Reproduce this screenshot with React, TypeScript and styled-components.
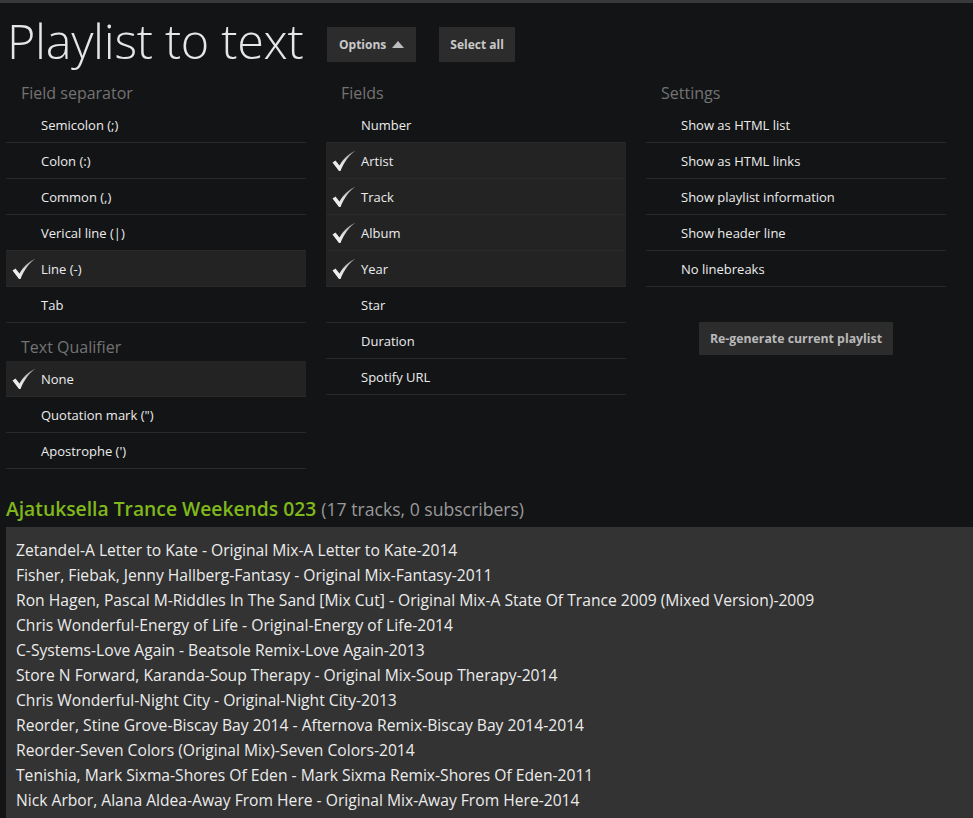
import React from "react";
import styled, { createGlobalStyle } from "styled-components";

const GlobalStyle = createGlobalStyle`
  html, body {
    margin: 0;
    padding: 0;
    background: #131416;
    font-family: "Open Sans", "Noto Sans", sans-serif;
    color: #e8e8e8;
  }
  * { box-sizing: border-box; }
`;

const TopBar = styled.div`
  height: 3px;
  background: #38393b;
`;

const Page = styled.div`
  padding: 0 0 0 6px;
`;

const Header = styled.header`
  height: 66px;
  display: flex;
  align-items: flex-start;
`;

const Title = styled.h1`
  flex: 0 0 321px;
  margin: 7px 0 0 0;
  padding-left: 1px;
  font-family: "Open Sans", sans-serif;
  font-weight: 300;
  font-size: 48.5px;
  line-height: 60px;
  color: #e6e6e6;
  letter-spacing: -0.3px;
  white-space: nowrap;
`;

const ToolButton = styled.button<{ $ml?: number; $px?: number }>`
  height: 35px;
  margin-left: ${(p) => p.$ml ?? 0}px;
  margin-top: 24px;
  padding: 0 ${(p) => p.$px ?? 11}px;
  border: none;
  background: #2c2c2d;
  color: #c9c9c9;
  font-family: "Open Sans", sans-serif;
  font-weight: 700;
  font-size: 12px;
  display: flex;
  align-items: center;
  gap: 6px;
  cursor: pointer;
`;

const Caret = styled.span`
  width: 0;
  height: 0;
  border-left: 6.5px solid transparent;
  border-right: 6.5px solid transparent;
  border-bottom: 7px solid #bdbdbd;
  margin-top: -1px;
`;

const Grid = styled.div`
  display: grid;
  grid-template-columns: repeat(3, 300px);
  column-gap: 20px;
  align-items: start;
`;

const Column = styled.div`
  display: flex;
  flex-direction: column;
`;

const SectionTitle = styled.div`
  height: 38px;
  display: flex;
  align-items: flex-end;
  padding-left: 15px;
  padding-bottom: 3px;
  font-size: 16px;
  line-height: 22px;
  color: #737373;
`;

const Row = styled.div<{ $checked?: boolean }>`
  height: 36px;
  display: flex;
  align-items: center;
  border-bottom: 1px solid #2a2a2b;
  background: ${(p) => (p.$checked ? "#232324" : "transparent")};
  font-size: 13px;
  color: #ececec;
`;

const CheckSlot = styled.span`
  width: 35px;
  flex: 0 0 35px;
  display: flex;
  align-items: center;
  justify-content: flex-start;
  padding-left: 6px;
`;

const ButtonWrap = styled.div`
  display: flex;
  justify-content: center;
  margin-top: 35px;
`;

const RegenButton = styled.button`
  height: 33px;
  padding: 0 11px 0 11px;
  border: none;
  background: #2c2c2d;
  color: #b9b9b9;
  font-family: "Open Sans", sans-serif;
  font-weight: 700;
  font-size: 12.3px;
  cursor: pointer;
`;

const PlaylistTitle = styled.h2`
  margin: 28px 0 6px 0;
  font-weight: 600;
  font-size: 19.3px;
  line-height: 24px;
  color: #80b81c;
`;

const Meta = styled.span`
  font-weight: 400;
  font-size: 17.6px;
  color: #999999;
`;

const TextBox = styled.div`
  background: #333333;
  padding: 11px 10px 12px 10px;
  font-size: 15.65px;
  line-height: 25px;
  color: #ececec;
  white-space: pre;
  overflow: hidden;
`;

const CheckIcon = () => (
  <svg width="24" height="22" viewBox="0 0 24 22">
    <defs>
      <linearGradient id="ck" x1="0" y1="1" x2="1" y2="0">
        <stop offset="0" stopColor="#ffffff" />
        <stop offset="0.5" stopColor="#d8d8d8" />
        <stop offset="1" stopColor="#8a8a8a" />
      </linearGradient>
    </defs>
    <path
      d="M0.5 12.5 L3.5 10.5 L7.5 15.5 C11 9.5 16 4 23.5 0.5 C17 5.5 12 12 8.5 21 L7 21 Z"
      fill="url(#ck)"
    />
  </svg>
);

type Opt = { label: string; checked?: boolean };

const separators: Opt[] = [
  { label: "Semicolon (;)" },
  { label: "Colon (:)" },
  { label: "Common (,)" },
  { label: "Verical line (|)" },
  { label: "Line (-)", checked: true },
  { label: "Tab" },
];

const qualifiers: Opt[] = [
  { label: "None", checked: true },
  { label: "Quotation mark (\")" },
  { label: "Apostrophe (')" },
];

const fields: Opt[] = [
  { label: "Number" },
  { label: "Artist", checked: true },
  { label: "Track", checked: true },
  { label: "Album", checked: true },
  { label: "Year", checked: true },
  { label: "Star" },
  { label: "Duration" },
  { label: "Spotify URL" },
];

const settings: Opt[] = [
  { label: "Show as HTML list" },
  { label: "Show as HTML links" },
  { label: "Show playlist information" },
  { label: "Show header line" },
  { label: "No linebreaks" },
];

const tracks = [
  "Zetandel-A Letter to Kate - Original Mix-A Letter to Kate-2014",
  "Fisher, Fiebak, Jenny Hallberg-Fantasy - Original Mix-Fantasy-2011",
  "Ron Hagen, Pascal M-Riddles In The Sand [Mix Cut] - Original Mix-A State Of Trance 2009 (Mixed Version)-2009",
  "Chris Wonderful-Energy of Life - Original-Energy of Life-2014",
  "C-Systems-Love Again - Beatsole Remix-Love Again-2013",
  "Store N Forward, Karanda-Soup Therapy - Original Mix-Soup Therapy-2014",
  "Chris Wonderful-Night City - Original-Night City-2013",
  "Reorder, Stine Grove-Biscay Bay 2014 - Afternova Remix-Biscay Bay 2014-2014",
  "Reorder-Seven Colors (Original Mix)-Seven Colors-2014",
  "Tenishia, Mark Sixma-Shores Of Eden - Mark Sixma Remix-Shores Of Eden-2011",
  "Nick Arbor, Alana Aldea-Away From Here - Original Mix-Away From Here-2014",
];

const OptionList = ({ items }: { items: Opt[] }) => (
  <>
    {items.map((o) => (
      <Row key={o.label} $checked={o.checked}>
        <CheckSlot>{o.checked && <CheckIcon />}</CheckSlot>
        {o.label}
      </Row>
    ))}
  </>
);

export default function App() {
  return (
    <>
      <GlobalStyle />
      <TopBar />
      <Page>
        <Header>
          <Title>Playlist to text</Title>
          <ToolButton $px={12}>
            Options <Caret />
          </ToolButton>
          <ToolButton $ml={23}>Select all</ToolButton>
        </Header>
        <Grid>
          <Column>
            <SectionTitle>Field separator</SectionTitle>
            <OptionList items={separators} />
            <SectionTitle>Text Qualifier</SectionTitle>
            <OptionList items={qualifiers} />
          </Column>
          <Column>
            <SectionTitle>Fields</SectionTitle>
            <OptionList items={fields} />
          </Column>
          <Column>
            <SectionTitle>Settings</SectionTitle>
            <OptionList items={settings} />
            <ButtonWrap>
              <RegenButton>Re-generate current playlist</RegenButton>
            </ButtonWrap>
          </Column>
        </Grid>
        <PlaylistTitle>
          Ajatuksella Trance Weekends 023 <Meta>(17 tracks, 0 subscribers)</Meta>
        </PlaylistTitle>
        <TextBox>{tracks.join("\n")}</TextBox>
      </Page>
    </>
  );
}
